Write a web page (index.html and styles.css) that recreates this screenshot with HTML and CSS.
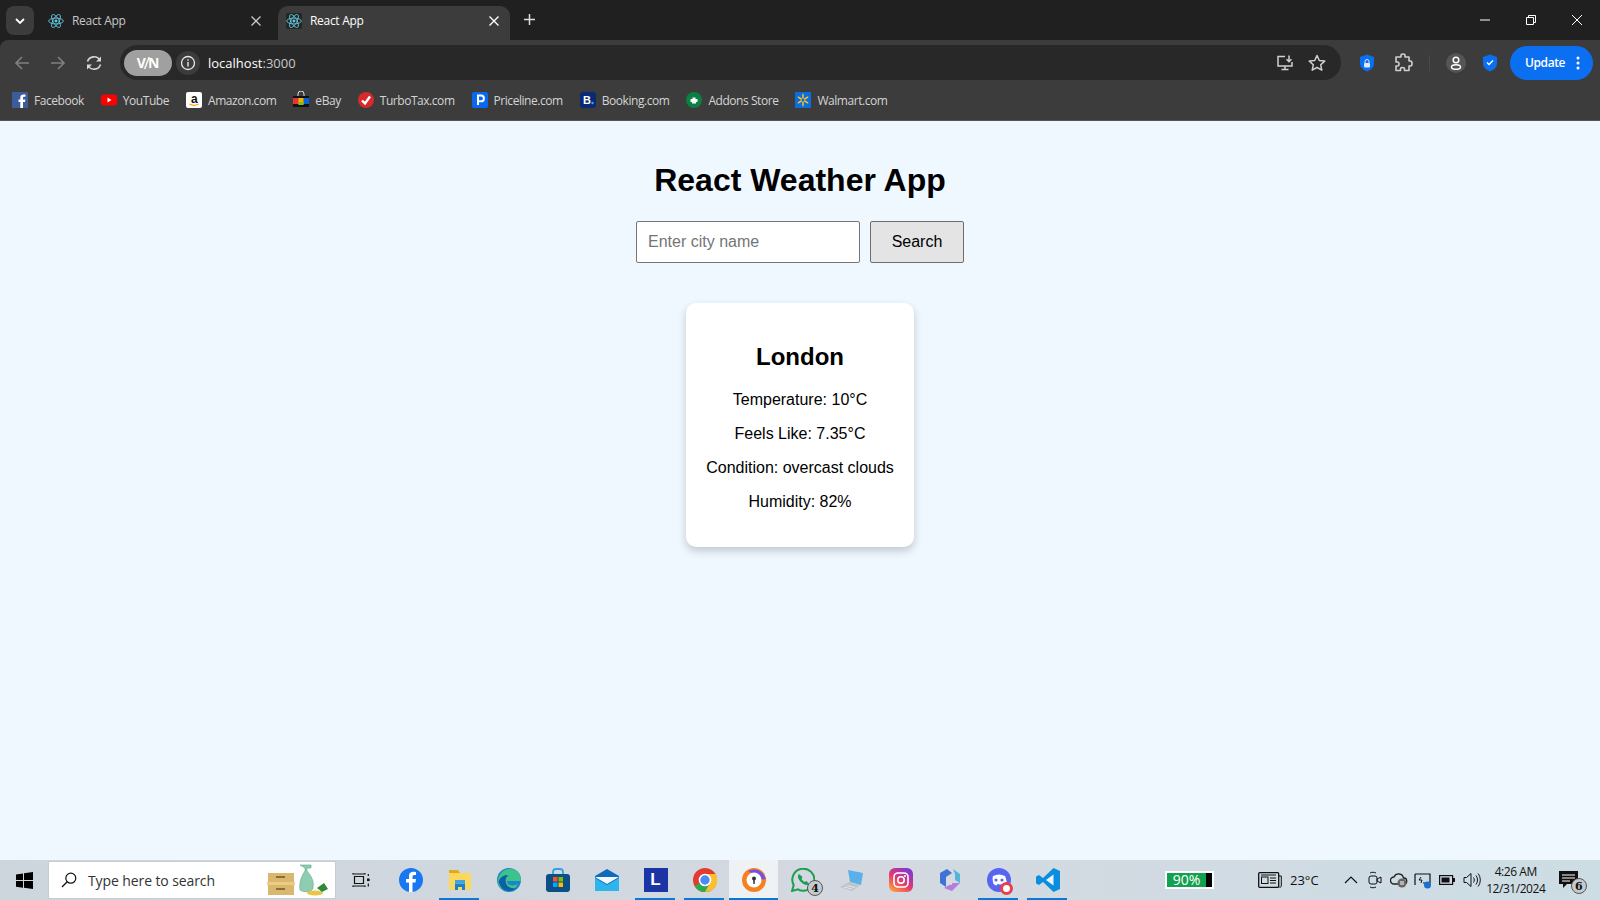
FILE: index.html
```html
<!DOCTYPE html>
<html lang="en">
<head>
  <meta charset="UTF-8">
  <title>React App</title>
  <link rel="stylesheet" href="styles.css">
</head>
<body>
  <svg class="defs" width="0" height="0">
    <symbol id="react" viewBox="0 0 24 24">
      <g fill="none" stroke="#61c8e0" stroke-width="1.3">
        <ellipse cx="12" cy="12" rx="11" ry="4.4"/>
        <ellipse cx="12" cy="12" rx="11" ry="4.4" transform="rotate(60 12 12)"/>
        <ellipse cx="12" cy="12" rx="11" ry="4.4" transform="rotate(120 12 12)"/>
      </g>
      <circle cx="12" cy="12" r="2.2" fill="#61c8e0"/>
    </symbol>
    <symbol id="shield" viewBox="0 0 16 18">
      <path d="M8 .5 15 3v6.5c0 3.8-3 6.4-7 8-4-1.6-7-4.2-7-8V3z" fill="#0b6ff2"/>
    </symbol>
  </svg>

  <div class="browser">
    <div class="tabstrip">
      <button class="tab-menu">
        <svg width="10" height="6" viewBox="0 0 10 6"><path d="M1 1l4 4 4-4" fill="none" stroke="#fff" stroke-width="1.8"/></svg>
      </button>
      <div class="tab tab-idle">
        <svg class="tab-icon" width="16" height="16"><use href="#react"/></svg>
        <span class="tab-title">React App</span>
        <svg class="tab-x" width="10" height="10" viewBox="0 0 10 10"><path d="M.5.5l9 9M9.5.5l-9 9" stroke="#c8c8c8" stroke-width="1.3"/></svg>
      </div>
      <div class="tab tab-active">
        <span class="tab-favicon"><svg width="16" height="16"><use href="#react"/></svg></span>
        <span class="tab-title">React App</span>
        <svg class="tab-x" width="10" height="10" viewBox="0 0 10 10"><path d="M.5.5l9 9M9.5.5l-9 9" stroke="#fff" stroke-width="1.4"/></svg>
      </div>
      <svg class="tab-new" width="11" height="11" viewBox="0 0 11 11"><path d="M5.5 0v11M0 5.5h11" stroke="#ddd" stroke-width="1.5"/></svg>
      <div class="win-controls">
        <span class="win-btn"><svg width="10" height="10" viewBox="0 0 10 10"><path d="M0 5h10" stroke="#fff"/></svg></span>
        <span class="win-btn"><svg width="10" height="10" viewBox="0 0 10 10"><path d="M.5 2.5h7v7h-7zM2.5 2.5v-2h7v7h-2" fill="none" stroke="#fff"/></svg></span>
        <span class="win-btn"><svg width="10" height="10" viewBox="0 0 10 10"><path d="M0 0l10 10M10 0L0 10" stroke="#fff"/></svg></span>
      </div>
    </div>

    <div class="toolbar">
      <span class="nav-btn"><svg width="16" height="16" viewBox="0 0 16 16"><path d="M15 8H2M8 2 2 8l6 6" fill="none" stroke="#808080" stroke-width="1.6"/></svg></span>
      <span class="nav-btn"><svg width="16" height="16" viewBox="0 0 16 16"><path d="M1 8h13M8 2l6 6-6 6" fill="none" stroke="#808080" stroke-width="1.6"/></svg></span>
      <span class="nav-btn"><svg width="18" height="18" viewBox="0 0 18 18"><path d="M2.5 7.5A6.8 6.8 0 0 1 15 6.5M15.5 10.500A6.800 6.800 0 0 1 3 11.500" fill="none" stroke="#d6d6d6" stroke-width="1.6"/><path d="M16 2.500v5h-5zM2 15.500v-5h5z" fill="#d6d6d6"/></svg></span>
      <div class="omnibox">
        <span class="vpn">V<i class="vpn-slash">/</i>N</span>
        <span class="site-info"><svg width="16" height="16" viewBox="0 0 16 16"><circle cx="8" cy="8" r="6.500" fill="none" stroke="#e8e8e8" stroke-width="1.300"/><path d="M8 7v4.500M8 4.300v1.400" stroke="#e8e8e8" stroke-width="1.400"/></svg></span>
        <span class="url">localhost<span class="url-port">:3000</span></span>
        <span class="omni-btn omni-first"><svg width="18" height="18" viewBox="0 0 18 18"><path d="M9 2.500H2v9.500h14V8M5.500 15.500h7M9 12v3.500M13 1.500v6M10.500 5.200 13 7.700l2.500-2.500" fill="none" stroke="#d0d0d0" stroke-width="1.500"/></svg></span>
        <span class="omni-btn"><svg width="18" height="18" viewBox="0 0 18 18"><path d="m9 1.500 2.300 5 5.400.6-4 3.700 1.100 5.400L9 13.500l-4.800 2.700 1.100-5.400-4-3.700 5.400-.6z" fill="none" stroke="#d0d0d0" stroke-width="1.500" stroke-linejoin="round"/></svg></span>
      </div>
      <span class="ext ext-lock">
        <svg width="16" height="18"><use href="#shield"/></svg>
        <svg class="ext-glyph" width="8" height="9" viewBox="0 0 8 9"><path d="M2 4V2.500a2 2 0 0 1 4 0V4" fill="none" stroke="#dbe8ff" stroke-width="1"/><rect x="1" y="4" width="6" height="4.500" rx="1" fill="#dbe8ff"/></svg>
      </span>
      <span class="ext"><svg width="20" height="20" viewBox="0 0 20 20"><path d="M8 2.500c0-2 4-2 4 0V4h4v4h1.500c2 0 2 5 0 5H16v4.500h-4.500V16c0-2-4-2-4 0v1.500H3V13h1.500c2 0 2-4 0-4H3V4h5z" fill="none" stroke="#cfcfcf" stroke-width="1.600" stroke-linejoin="round"/></svg></span>
      <span class="tool-sep"></span>
      <span class="profile"><svg width="12" height="14" viewBox="0 0 12 14"><circle cx="6" cy="4" r="2.800" fill="none" stroke="#fff" stroke-width="1.500"/><ellipse cx="6" cy="11" rx="4.500" ry="2.300" fill="none" stroke="#fff" stroke-width="1.500"/></svg></span>
      <span class="ext ext-check">
        <svg width="16" height="18"><use href="#shield"/></svg>
        <svg class="ext-glyph" width="8" height="7" viewBox="0 0 8 7"><path d="m1 3.500 2 2 4-4" fill="none" stroke="#fff" stroke-width="1.300"/></svg>
      </span>
      <span class="update">Update
        <svg width="4" height="14" viewBox="0 0 4 14"><circle cx="2" cy="2" r="1.500" fill="#fff"/><circle cx="2" cy="7" r="1.500" fill="#fff"/><circle cx="2" cy="12" r="1.500" fill="#fff"/></svg>
      </span>
    </div>

    <div class="bookmarks">
      <span class="bm"><svg width="16" height="16" viewBox="0 0 16 16"><rect width="16" height="16" rx="1" fill="#3f5c9a"/><path d="M11 16v-6h2l.4-2.500H11V6c0-.8.300-1.200 1.300-1.200h1.200V2.500h-2C9.500 2.500 8.300 3.700 8.300 5.700v1.800H6.500V10h1.800v6z" fill="#fff"/></svg>Facebook</span>
      <span class="bm"><svg width="16" height="16" viewBox="0 0 16 16"><rect y="2.500" width="16" height="11" rx="3" fill="#f00"/><path d="M6.500 5.500v5l4-2.500z" fill="#fff"/></svg>YouTube</span>
      <span class="bm"><svg width="16" height="16" viewBox="0 0 16 16"><rect width="16" height="16" rx="2" fill="#fff"/><text x="8" y="10.500" class="bm-a">a</text><path d="M3.500 12c3 1.800 6 1.800 9 0" fill="none" stroke="#f90" stroke-width="1.200"/></svg>Amazon.com</span>
      <span class="bm"><svg width="16" height="18" viewBox="1 0 16 18"><path d="M6 5V3a3 3 0 0 1 6 0v2" fill="none" stroke="#ddd" stroke-width="1"/><rect x="1" y="5" width="16" height="2" fill="#111"/><rect x="1" y="7" width="5.300" height="6" fill="#e53238"/><rect x="6.300" y="7" width="5.400" height="6" fill="#f5af02"/><rect x="11.700" y="7" width="5.300" height="6" fill="#0064d2"/><rect x="1" y="13" width="16" height="3" fill="#111"/><rect x="6.300" y="11" width="5.400" height="3" fill="#86b817"/></svg>eBay</span>
      <span class="bm"><svg width="16" height="16" viewBox="0 0 16 16"><circle cx="8" cy="8" r="8" fill="#d52b2b"/><path d="m4 8.500 3 3 5-7" fill="none" stroke="#fff" stroke-width="2.400"/></svg>TurboTax.com</span>
      <span class="bm"><svg width="16" height="16" viewBox="0 0 16 16"><rect width="16" height="16" rx="2" fill="#0a68f0"/><path d="M6 13V3.500h3a2.800 2.800 0 0 1 0 5.800H6" fill="none" stroke="#fff" stroke-width="2"/></svg>Priceline.com</span>
      <span class="bm"><svg width="16" height="16" viewBox="0 0 16 16"><rect width="16" height="16" rx="3" fill="#0b2a74"/><text x="3" y="12" class="bm-b">B</text><circle cx="12.500" cy="11" r="1.200" fill="#3aa6ff"/></svg>Booking.com</span>
      <span class="bm"><svg width="16" height="16" viewBox="0 0 16 16"><circle cx="8" cy="8" r="8" fill="#0b8043"/><path d="M4.500 7h2V5.500h3V7h2v3h-1.500v1.500h-4V10H4.500z" fill="#fff"/></svg>Addons Store</span>
      <span class="bm"><svg width="16" height="16" viewBox="0 0 16 16"><rect width="16" height="16" fill="#0b6dde"/><path d="M8 2.500v3.500M8 10v3.500M3.300 5.200l3 1.800M9.700 9l3 1.800M12.700 5.200l-3 1.800M6.300 9l-3 1.800" stroke="#ffc220" stroke-width="1.500" stroke-linecap="round"/></svg>Walmart.com</span>
    </div>
  </div>

  <main class="app">
    <h1>React Weather App</h1>
    <div class="search">
      <input type="text" placeholder="Enter city name">
      <button>Search</button>
    </div>
    <div class="card">
      <h2>London</h2>
      <p>Temperature: 10°C</p>
      <p>Feels Like: 7.35°C</p>
      <p>Condition: overcast clouds</p>
      <p>Humidity: 82%</p>
    </div>
  </main>

  <footer class="taskbar">
    <span class="start"><svg width="17" height="17" viewBox="0 0 17 17"><path d="M0 2.400 7 1.400v6.700H0zM8 1.200 17 0v8.100H8zM0 9h7v6.700L0 14.700zM8 9h9v8l-9-1.200z" fill="#000"/></svg></span>
    <div class="searchbox">
      <svg width="16" height="16" viewBox="0 0 16 16"><circle cx="9.800" cy="6.200" r="5" fill="none" stroke="#111" stroke-width="1.200"/><path d="M6.200 9.800 1 15" stroke="#111" stroke-width="1.300"/></svg>
      <span class="search-text">Type here to search</span>
      <svg class="search-art" width="62" height="32" viewBox="0 0 62 32">
        <rect x="1" y="9" width="26" height="9" fill="#d9b76c"/><rect x="0" y="18" width="28" height="3" fill="#eccd86"/>
        <rect x="1" y="21" width="26" height="10" fill="#d9b76c"/><rect x="9" y="12" width="9" height="2" fill="#8a6d34"/><rect x="9" y="24" width="9" height="2" fill="#8a6d34"/>
        <path d="M33 1h11v3h-4v3c5 6 7 10 6 17-.5 4-9 5-13 2-1-7 1-13 5-19V4z" fill="#8fcdb0" stroke="#5fa589" stroke-width=".6"/>
        <ellipse cx="48" cy="29" rx="8" ry="2.500" fill="#e8c542"/><path d="m50 24 7-5 4 6-6 3z" fill="#2e8b3a"/>
      </svg>
    </div>
    <span class="task task-view"><svg width="18" height="16" viewBox="0 0 18 16"><path d="M1 1v1h12V1M1 15v-1h12v1M2.500 4.500h9v7h-9z" fill="none" stroke="#111" stroke-width="1.200"/><rect x="15" y="6.500" width="2.600" height="2.600" fill="#111"/><path d="M16.300 2v2M16.300 11.500v3" stroke="#111" stroke-width="1.200"/></svg></span>
    <span class="task"><svg width="24" height="24" viewBox="0 0 24 24"><circle cx="12" cy="12" r="12" fill="#1877f2"/><path d="M13.500 24v-9.500h3l.5-3.500h-3.500V8.800c0-1 .5-1.800 1.900-1.800H17V4c-3.600-.6-7-.2-7 4.300V11H7v3.500h3V24z" fill="#fff"/></svg></span>
    <span class="task task-open"><svg width="24" height="22" viewBox="0 0 24 22"><path d="M1 1h9l2 3H1z" fill="#e3a821"/><rect x="1" y="4" width="22" height="17" rx="1" fill="#fbd75b"/><path d="M7 21v-6.500h10V21h-3v-3h-4v3z" fill="#1a80d4"/><rect x="7" y="11" width="10" height="3.500" fill="#3aa6e8"/></svg></span>
    <span class="task"><svg width="24" height="24" viewBox="0 0 24 24"><circle cx="12" cy="12" r="12" fill="#1b86c9"/><path d="M1 11C3 3 10 0 15 1c6 1 9 6 9 12H10c0 4 5 6 11 3-3 6-9 8-14 6C2 20 0 16 1 11z" fill="#3bc38a"/><path d="M1.500 14C3 8 9 6 12 8c-3 0-4 3-3 7 1 4 5 6 10 5-4 4-12 4-15-1-1-2-2-3-2.500-5z" fill="#0d5fa8"/></svg></span>
    <span class="task"><svg width="24" height="24" viewBox="0 0 24 24"><path d="M7 7V4a3 3 0 0 1 3-3h4a3 3 0 0 1 3 3v3" fill="none" stroke="#2aa6e8" stroke-width="1.800"/><rect y="6" width="24" height="18" rx="3" fill="#0c4f86"/><rect x="7" y="9" width="4.500" height="4.500" fill="#f35325"/><rect x="12.500" y="9" width="4.500" height="4.500" fill="#81bc06"/><rect x="7" y="14.500" width="4.500" height="4.500" fill="#05a6f0"/><rect x="12.500" y="14.500" width="4.500" height="4.500" fill="#ffba08"/></svg></span>
    <span class="task"><svg width="24" height="24" viewBox="0 0 24 24"><path d="M12 1 0 8v15h24V8z" fill="#0f6cbd"/><path d="M0 9h24L12 16z" fill="#f2f8fc"/><path d="M0 10v13h24V10l-12 7z" fill="#2db5ec"/></svg></span>
    <span class="task task-open"><span class="app-l">L</span></span>
    <span class="task task-open"><svg width="24" height="24" viewBox="0 0 24 24"><circle cx="12" cy="12" r="12" fill="#e33b2e"/><path d="M12 12 1.600 18A12 12 0 0 0 12 24c2.500 0 4-.5 5-1z" fill="#2da94f"/><path d="M12 6h10.600A12 12 0 0 1 12 24l5-9z" fill="#fbc02d"/><circle cx="12" cy="12" r="5.500" fill="#4a8af4" stroke="#fff" stroke-width="1.600"/></svg></span>
    <span class="task task-open task-active"><svg width="24" height="24" viewBox="0 0 24 24"><circle cx="12" cy="12" r="12" fill="#f5821f"/><path d="M6 3a12 12 0 0 1 16 4l2 4-8 1C15 8 11 6 6 3z" fill="#7a4fe0"/><circle cx="12" cy="12" r="7.500" fill="#fff"/><circle cx="12" cy="10.500" r="2" fill="#333"/><path d="M12 11v5" stroke="#333" stroke-width="1.500"/></svg></span>
    <span class="task"><svg width="24" height="24" viewBox="0 0 24 24"><path d="M1 23l1.700-6A11 11 0 1 1 7 21.300z" fill="none" stroke="#1d9d52" stroke-width="2"/><path d="M8 6c-2 2-1 5 2 8s6 4 8 2l-2.500-3-2 1c-1.500-1-2.500-2-3-3l1-2z" fill="#1d9d52"/></svg><span class="task-badge">4</span></span>
    <span class="task"><svg width="24" height="24" viewBox="0 0 24 24"><path d="M8 2l15 3-2 12-11-3z" fill="#5ab0e8"/><path d="M0 19l9-5 11 3-8 6z" fill="#bfc4c8"/><path d="M4 19l8 2M7 17.500l8 2" stroke="#e6e8ea"/></svg></span>
    <span class="task"><span class="app-ig"><svg width="16" height="16" viewBox="0 0 16 16"><rect x="1" y="1" width="14" height="14" rx="4" fill="none" stroke="#fff" stroke-width="1.600"/><circle cx="8" cy="8" r="3.200" fill="none" stroke="#fff" stroke-width="1.600"/><circle cx="12" cy="4" r="1" fill="#fff"/></svg></span></span>
    <span class="task"><svg width="22" height="24" viewBox="0 0 22 24"><path d="M8 1 1 5v10l6 4V9l6-4z" fill="#3f73d8"/><path d="M14 1l7 5v9l-5-3V6z" fill="#56b4d8"/><path d="M21 15l-8 8-8-3 9-5z" fill="#b57bdd"/><path d="M7 9l6 3v5l-6-2z" fill="#d7dae0"/></svg></span>
    <span class="task task-open"><svg width="24" height="24" viewBox="0 0 24 24"><circle cx="12" cy="12" r="12" fill="#5865f2"/><path d="M6 8c4-2 8-2 12 0 1 3 2 5 1.500 8-1 .8-2 1.300-3 1.500l-1-1.500c-2 .6-3 .6-5 0l-1 1.500c-1-.2-2-.7-3-1.500C6 13 5 11 6 8z" fill="#fff"/><circle cx="9" cy="12" r="1.600" fill="#5865f2"/><circle cx="15" cy="12" r="1.600" fill="#5865f2"/></svg><span class="rec-dot"></span></span>
    <span class="task task-open"><svg width="24" height="24" viewBox="0 0 24 24"><path d="M17.500 0 24 3v18l-6.500 3L7 14l-4 3-3-1.500V8.500L3 7l4 3z" fill="#0b8fdc"/><path d="M17.500 6.500 10 12l7.500 5.500z" fill="#eaf3fa"/></svg></span>

    <div class="tray">
      <span class="batt-meter"><span class="batt-fill">90%</span><span class="batt-end"></span></span>
      <span class="weather">
        <svg width="24" height="16" viewBox="0 0 24 16"><rect x=".7" y=".7" width="20" height="14.600" rx="1" fill="none" stroke="#111" stroke-width="1.300"/><rect x="3.500" y="5" width="6.500" height="6.500" fill="none" stroke="#111"/><path d="M3 3h15M12 6h6M12 8.500h6M12 11h6M21 4h2.300v10a1.300 1.300 0 0 1-2 1" fill="none" stroke="#111"/></svg>
        23°C
      </span>
      <span class="tray-icons">
        <svg width="14" height="8" viewBox="0 0 14 8"><path d="m1 7 6-6 6 6" fill="none" stroke="#111" stroke-width="1.200"/></svg>
        <svg width="14" height="18" viewBox="0 0 14 18"><rect x="1" y="5" width="8" height="8" rx="2" fill="none" stroke="#111"/><path d="m9 8 4-2v6l-4-2zM2 2c2-1 4-1 6 0M2 16c2 1 4 1 6 0" fill="none" stroke="#111"/></svg>
        <svg width="18" height="16" viewBox="0 0 18 16"><path d="M4 12a3.500 3.500 0 0 1 0-7 5 5 0 0 1 9.500 1A3 3 0 0 1 14 12z" fill="none" stroke="#222" stroke-width="1.300"/><circle cx="12" cy="11" r="4.500" fill="#666"/><path d="M11 9v4M13 9v4" stroke="#fff"/></svg>
        <svg width="18" height="18" viewBox="0 0 18 18"><path d="M1 3h15v9H9M1 3v11" fill="none" stroke="#111" stroke-width="1.200"/><path d="M7 6 5 9h3l-1 3" fill="none" stroke="#111"/><circle cx="13.500" cy="14" r="3.500" fill="#1a6fd0"/></svg>
        <svg width="16" height="10" viewBox="0 0 16 10"><rect x=".6" y=".6" width="13" height="8.800" fill="none" stroke="#111" stroke-width="1.200"/><rect x="2.500" y="2.500" width="8" height="5" fill="#111"/><rect x="14" y="3" width="2" height="4" fill="#111"/></svg>
        <svg width="18" height="16" viewBox="0 0 18 16"><path d="M1 5.500h2.500L8 1.500v13l-4.500-4H1z" fill="none" stroke="#111"/><path d="M10.500 5.500c1 1.500 1 3.500 0 5M13 3.500c2 2.500 2 6.500 0 9M15 1.500c3 3.500 3 9.500 0 13" fill="none" stroke="#111"/></svg>
      </span>
      <span class="clock"><span>4:26 AM</span><span>12/31/2024</span></span>
      <span class="notif">
        <svg width="19" height="18" viewBox="0 0 19 18"><path d="M0 0h19v13H8l-4 4v-4H0z" fill="#111"/><path d="M3 4h13M3 7h13M3 10h8" stroke="#fff"/></svg>
        <span class="task-badge notif-badge">6</span>
      </span>
    </div>
  </footer>
</body>
</html>
```

FILE: styles.css
```css
html, body { margin: 0; padding: 0; height: 900px; overflow: hidden; }
body { display: flex; flex-direction: column; background: #f0f8ff; font-family: "Liberation Sans", Arial, sans-serif; }
.defs { position: absolute; }

/* browser chrome */
.browser { flex: none; font-family: "Open Sans", "Noto Sans", sans-serif; background: #202020; color: #fff; }
.tabstrip { display: flex; align-items: flex-end; height: 40px; padding-left: 6px; }
.tab-menu { flex: none; width: 28px; height: 29px; margin: 0 0 5px; padding: 0; border: 0; border-radius: 8px; background: #3c3c3c; display: flex; align-items: center; justify-content: center; }
.tab { flex: none; display: flex; align-items: center; height: 34px; box-sizing: border-box; padding-bottom: 5px; font-size: 12px; letter-spacing: -.3px; }
.tab-idle { width: 244px; padding-left: 14px; padding-right: 17px; color: #c7c7c7; }
.tab-title { flex: 1; margin-left: 8px; }
.tab-active { width: 232px; padding-left: 8px; padding-right: 11px; background: #3c3c3c; color: #fff; border-radius: 10px 10px 0 0; }
.tab-favicon { display: flex; background: #252525; border-radius: 2px; }
.tab-new { margin: 0 0 15px 14px; }
.win-controls { display: flex; margin-left: auto; align-self: flex-start; }
.win-btn { width: 46px; height: 40px; display: flex; align-items: center; justify-content: center; }

.toolbar { display: flex; align-items: center; height: 41px; padding: 2px 0 0 4px; background: #3c3c3c; border-radius: 8px 0 0 0; }
.nav-btn { flex: none; width: 36px; display: flex; justify-content: center; }
.omnibox { flex: none; display: flex; align-items: center; width: 1221px; height: 35px; box-sizing: border-box; margin-left: 8px; padding: 0 8px 0 4px; background: #282828; border-radius: 18px; }
.vpn { width: 48px; height: 26px; border-radius: 13px; background: #a0a0a0; color: #fff; font-size: 14px; font-weight: 700; display: flex; align-items: center; justify-content: center; }
.vpn-slash { font-style: normal; font-weight: 400; font-size: 17px; line-height: 17px; margin: 0 -2px; }
.site-info { width: 24px; height: 24px; margin-left: 4px; border-radius: 50%; background: #3c3c3c; display: flex; align-items: center; justify-content: center; }
.url { margin-left: 8px; font-size: 13px; color: #fff; }
.url-port { color: #c8c8c8; }
.omni-btn { flex: none; width: 32px; display: flex; justify-content: center; }
.omni-first { margin-left: auto; }
.ext { flex: none; position: relative; width: 32px; height: 32px; display: flex; align-items: center; justify-content: center; }
.ext-lock { margin-left: 10px; margin-right: 4px; }
.ext-glyph { position: absolute; left: 12px; top: 12px; }
.tool-sep { flex: none; width: 1px; height: 16px; margin: 0 10px; background: #4a4a4a; }
.profile { flex: none; width: 20px; height: 20px; margin: 0 6px; border-radius: 50%; background: #555; display: flex; align-items: center; justify-content: center; }
.ext-check { margin-right: 4px; margin-left: 2px; }
.update { flex: none; display: flex; align-items: center; justify-content: space-between; width: 83px; height: 34px; box-sizing: border-box; padding: 0 13px 0 15px; border-radius: 17px; background: #0b6ff2; font-size: 12px; font-weight: 600; letter-spacing: -.4px; }

.bookmarks { display: flex; align-items: center; gap: 17px; height: 34px; padding: 0 0 3px 12px; background: #3c3c3c; font-size: 12px; color: #d4d4d4; border-bottom: 1px solid #555; }
.bm { display: flex; align-items: center; gap: 6px; white-space: nowrap; letter-spacing: -.45px; }
.bm-a { font: 700 12px "Liberation Sans", sans-serif; text-anchor: middle; fill: #111; }
.bm-b { font: 700 11px "Liberation Sans", sans-serif; fill: #fff; }

/* the weather app */
.app { flex: 1; min-height: 0; display: flex; flex-direction: column; align-items: center; padding-top: 20px; color: #000; }
.app h1 { margin: 21.44px 0; font-size: 32px; line-height: 37px; font-weight: 700; }
.search { display: flex; gap: 10px; }
.search input { width: 201px; padding: 10px 10px 10px 11px; font: 16px "Liberation Sans", Arial, sans-serif; border: 1px solid #767676; border-radius: 2px; background: #fff; height: 20px; box-sizing: content-box; }
.search input::placeholder { color: #757575; }
.search button { width: 94px; height: 42px; padding: 0; font: 16px "Liberation Sans", Arial, sans-serif; color: #000; background: #e4e4e4; border: 1px solid #6e6e6e; border-radius: 2px; }
.card { box-sizing: border-box; width: 228px; margin-top: 40px; padding: 20px; background: #fff; border-radius: 10px; box-shadow: 0 4px 8px rgba(0, 0, 0, .2); text-align: center; }
.card h2 { margin: 19.92px 0 21px; font-size: 24px; line-height: 27px; font-weight: 700; }
.card p { margin: 16px 0; font-size: 16px; line-height: 18px; white-space: nowrap; }

/* windows taskbar */
.taskbar { flex: none; display: flex; align-items: center; height: 40px; font-family: "Open Sans", "Noto Sans", sans-serif; background: linear-gradient(90deg, #cdd5dd, #d4d9e1 55%, #cddde4); color: #111; }
.start { flex: none; width: 48px; display: flex; justify-content: center; }
.searchbox { flex: none; display: flex; align-items: center; width: 288px; height: 38px; box-sizing: border-box; padding: 0 6px 0 12px; background: #fff; border: 1px solid #c4ccd4; font-size: 14px; color: #333; }
.search-text { flex: 1; margin-left: 11px; letter-spacing: -.1px; }
.task { flex: none; position: relative; width: 49px; height: 40px; display: flex; align-items: center; justify-content: center; }
.task-view { width: 50px; }
.task-open::after { content: ""; position: absolute; left: 4px; right: 5px; bottom: 0; height: 2px; background: #0a78d4; }
.task-active { background: #eff2f5; }
.task-active::after { left: 0; right: 0; }
.task-badge { position: absolute; left: 29px; top: 20px; width: 16px; height: 16px; border-radius: 50%; background: #c5cacd; border: 1px solid #555; box-sizing: border-box; display: flex; align-items: center; justify-content: center; font: 700 11px "DejaVu Serif", serif; color: #111; }
.app-l { width: 24px; height: 24px; background: #1b35a5; color: #fff; font: 700 17px "Liberation Sans", sans-serif; display: flex; align-items: center; justify-content: center; }
.app-ig { width: 24px; height: 24px; border-radius: 6px; background: linear-gradient(35deg, #fdb43a, #e8396a 45%, #9537c0 80%, #6a3ed0); display: flex; align-items: center; justify-content: center; }
.rec-dot { position: absolute; left: 26px; top: 22px; width: 7px; height: 7px; border: 3px solid #e8404a; border-radius: 50%; background: #fff; }

.tray { flex: 1; display: flex; align-items: center; min-width: 0; }
.batt-meter { flex: none; display: flex; width: 49px; height: 18px; margin-left: 93px; box-sizing: border-box; border: 2px solid #fff; background: #000; }
.batt-fill { width: 39px; background: #12a150; color: #fff; font-size: 14px; line-height: 14px; text-align: center; }
.batt-end { width: 2px; }
.weather { flex: none; display: flex; align-items: center; gap: 8px; margin-left: 44px; font-size: 13px; }
.tray-icons { flex: none; display: grid; grid-auto-flow: column; grid-auto-columns: 24.2px; justify-items: center; align-items: center; margin-left: 20px; }
.clock { flex: none; display: flex; flex-direction: column; align-items: center; width: 76px; margin-left: -6px; font-size: 12px; line-height: 17px; letter-spacing: -.45px; }
.notif { flex: none; position: relative; width: 30px; margin-left: 5px; display: flex; }
.notif-badge { left: 12px; top: 7px; }
```
